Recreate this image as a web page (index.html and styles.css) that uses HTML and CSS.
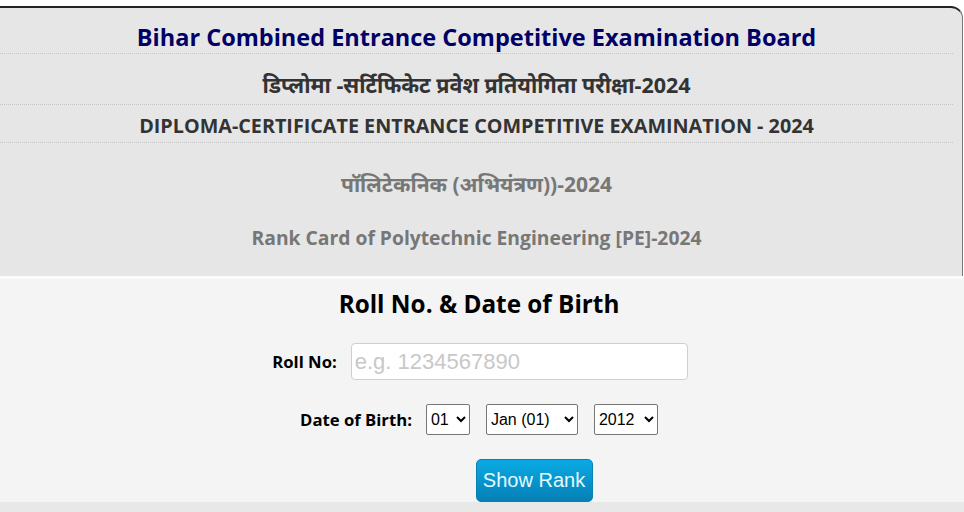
FILE: index.html
```html
<!DOCTYPE html>
<html lang="en">
<head>
<meta charset="utf-8">
<title>Rank Card of Polytechnic Engineering</title>
<link rel="stylesheet" href="styles.css">
</head>
<body>
<div class="page">
  <div class="board">
    <div class="row row-title"><h1>Bihar Combined Entrance Competitive Examination Board</h1></div>
    <div class="row row-hindi"><h2>डिप्लोमा -सर्टिफिकेट प्रवेश प्रतियोगिता परीक्षा<span class="num">-2024</span></h2></div>
    <div class="row row-exam"><h3>DIPLOMA-CERTIFICATE ENTRANCE COMPETITIVE EXAMINATION - 2024</h3></div>
    <div class="course">
      <p class="course-hi">पॉलिटेकनिक (अभियंत्रण))<span class="num">-2024</span></p>
      <p class="course-en">Rank Card of Polytechnic Engineering [PE]-2024</p>
    </div>
  </div>
  <form class="login">
    <h4 class="login-title">Roll No. &amp; Date of Birth</h4>
    <div class="field field-roll">
      <label class="label" for="roll">Roll No:</label>
      <input class="input" id="roll" type="text" placeholder="e.g. 1234567890">
    </div>
    <div class="field field-dob">
      <span class="label">Date of Birth:</span>
      <div class="selects">
        <select class="sel sel-day"><option>01</option></select>
        <select class="sel sel-month"><option>Jan (01)</option></select>
        <select class="sel sel-year"><option>2012</option></select>
      </div>
    </div>
    <div class="actions">
      <button class="btn" type="button">Show Rank</button>
    </div>
  </form>
  <div class="footer-strip"></div>
</div>
</body>
</html>
```
FILE: styles.css
```css
html, body {
  margin: 0;
  padding: 0;
  background: #ffffff;
}
body {
  font-family: "Open Sans", "Noto Sans", sans-serif;
  width: 964px;
  height: 512px;
  overflow: hidden;
}
.page {
  padding-top: 6px;
}
.board {
  background: #e6e6e6;
  border-top: 2px solid #222;
  border-right: 1px solid #777;
  border-top-right-radius: 12px;
  width: 963px;
  box-sizing: border-box;
  padding-right: 9px;
}
.row {
  display: flex;
  align-items: flex-start;
  justify-content: center;
  box-sizing: border-box;
  border-bottom: 1px dotted #c4c4c4;
}
.row h1, .row h2, .row h3 {
  margin: 0;
  line-height: 1;
}
.num {
  font-family: "Open Sans", sans-serif;
}
.row-title {
  height: 46px;
  padding-top: 18px;
}
.row-title h1 {
  font-size: 23.5px;
  font-weight: 700;
  color: #000066;
}
.row-hindi {
  height: 51px;
  padding-top: 20px;
}
.row-hindi h2 {
  font-size: 21.5px;
  font-weight: 700;
  color: #333;
}
.row-exam {
  height: 38px;
  padding-top: 11px;
}
.row-exam h3 {
  font-size: 19.75px;
  font-weight: 700;
  color: #333;
}
.course {
  height: 133px;
  display: flex;
  flex-direction: column;
  align-items: center;
  color: #777;
  font-weight: 700;
}
.course p { margin: 0; line-height: 1.3; }
.course-hi {
  font-size: 21px;
  margin-top: 28px !important;
}
.course-en {
  font-size: 19.3px;
  margin-top: 27px !important;
}
.login {
  background: #f4f4f4;
  border-top: 3px solid #fbfbfb;
  height: 226px;
  box-sizing: border-box;
  display: flex;
  flex-direction: column;
  align-items: center;
}
.login-title {
  margin: 8px 6px 0 0;
  font-size: 24.3px;
  font-weight: 700;
  color: #000;
}
.field {
  display: flex;
  align-items: center;
  gap: 14px;
}
.label {
  font-size: 16.7px;
  font-weight: 700;
  color: #000;
}
.field-roll {
  margin-top: 23px;
  margin-right: 4px;
}
.input {
  width: 337px;
  height: 37px;
  box-sizing: border-box;
  border: 1px solid #cfcfcf;
  border-radius: 4px;
  background: #fff;
  font-family: "Liberation Sans", Arial, sans-serif;
  font-size: 22px;
  padding: 0 3px;
  outline: none;
}
.input::placeholder { color: #c8c8c8; }
.field-dob {
  margin-top: 24px;
  margin-right: 6px;
}
.selects {
  display: flex;
  gap: 16px;
}
.sel {
  height: 31px;
  font-family: "Liberation Sans", Arial, sans-serif;
  font-size: 16px;
  color: #000;
  background: #fff;
  border: 1px solid #767676;
  border-radius: 2px;
}
.sel-day { width: 44px; }
.sel-month { width: 92px; }
.sel-year { width: 64px; }
.actions {
  margin-top: 24px;
  padding-left: 104px;
}
.btn {
  width: 117px;
  height: 43px;
  border: 1px solid #0a7fb0;
  border-radius: 5px;
  background: linear-gradient(#0aaae4, #0580b6);
  color: #e6f9ff;
  font-family: "Liberation Sans", Arial, sans-serif;
  font-size: 20px;
  padding: 0;
}
.footer-strip {
  height: 10px;
  background: #e8e8e8;
}
```
